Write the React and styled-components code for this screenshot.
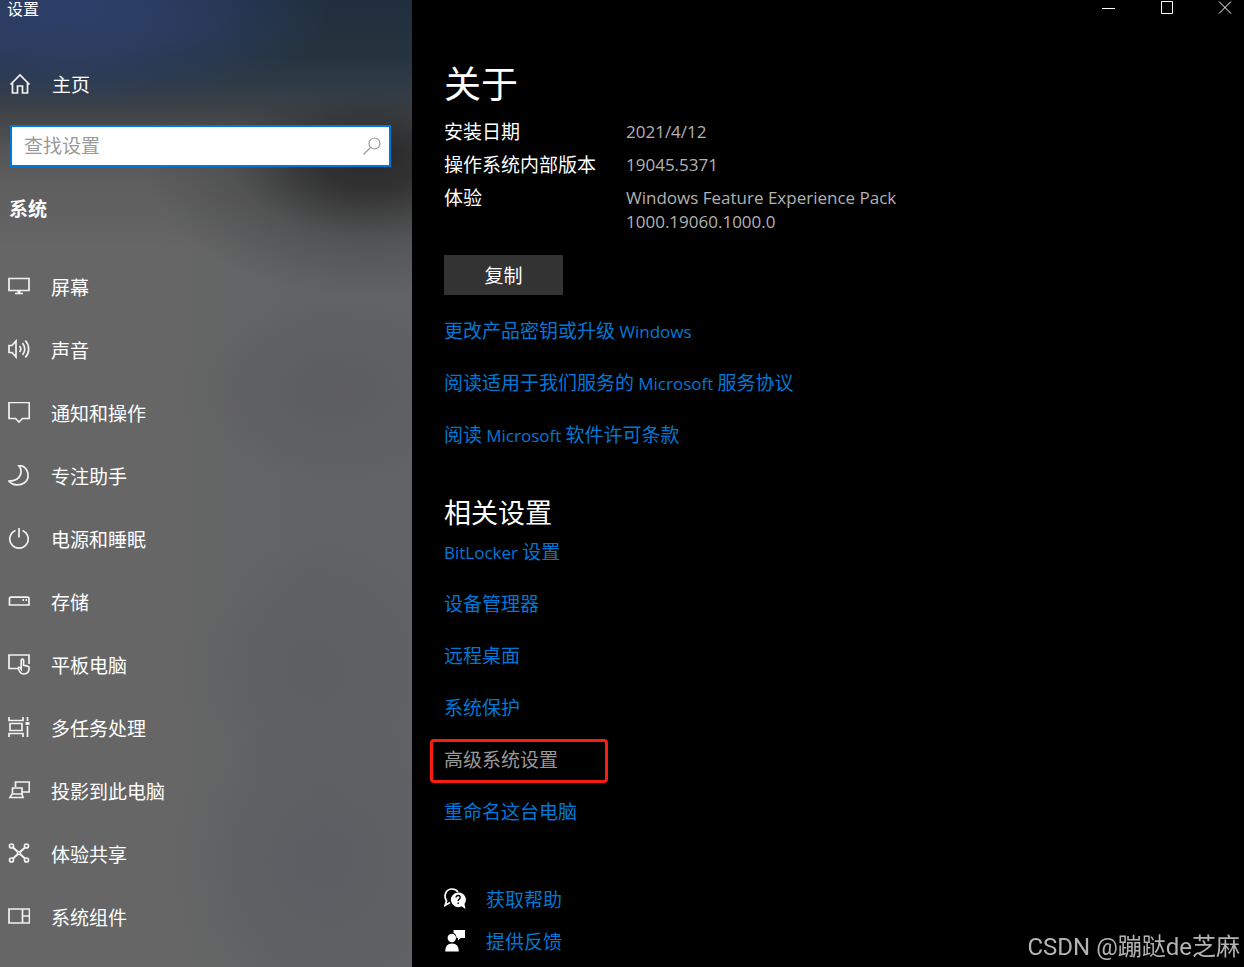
import React from "react";
import styled, { createGlobalStyle } from "styled-components";

const GlobalStyle = createGlobalStyle`
  * {
    box-sizing: border-box;
  }
  body {
    margin: 0;
    font-family: "Noto Sans CJK SC", sans-serif;
    font-size: 19px;
    line-height: 24px;
    color: #ffffff;
    background-color: #000000;
  }
`;

const Window = styled.div`
  display: flex;
  min-height: 100vh;
`;
const Sidebar = styled.aside`
  flex: 0 0 412px;
  max-width: 50%;
  background:
    radial-gradient(ellipse 260px 100px at 70px 10px, rgba(46, 64, 108, 0.95) 0%, rgba(46, 64, 108, 0.7) 45%, rgba(46, 64, 108, 0) 100%),
    linear-gradient(to bottom, #202e3d 0, #26343f 55px, rgba(44, 57, 69, 0.95) 80px, rgba(50, 58, 68, 0.65) 105px, rgba(60, 64, 70, 0.3) 125px, rgba(64, 66, 70, 0) 150px),
    radial-gradient(ellipse 230px 140px at 370px 155px, rgba(38, 38, 38, 0.95) 0%, rgba(42, 42, 42, 0.85) 25%, rgba(60, 60, 60, 0.4) 60%, rgba(90, 90, 90, 0) 100%),
    radial-gradient(ellipse 150px 90px at 330px 390px, rgba(86, 86, 88, 0.5) 0%, rgba(88, 88, 90, 0) 100%),
    radial-gradient(ellipse 130px 130px at 310px 670px, rgba(88, 92, 97, 0.6) 0%, rgba(88, 92, 97, 0) 100%),
    radial-gradient(ellipse 150px 150px at 320px 860px, rgba(88, 92, 97, 0.8) 0%, rgba(88, 92, 97, 0) 100%),
    linear-gradient(to right, rgba(96, 98, 100, 0) 160px, rgba(96, 98, 100, 0.8) 320px),
    linear-gradient(to bottom, #464748 0, #4c4d4e 125px, #5e5e5e 180px, #666666 250px);
`;
const AppName = styled.div`
  padding-left: 7px;
  font-size: 16px;
  line-height: 16px;
`;
const HomeLink = styled.a`
  display: flex;
  align-items: center;
  gap: 21px;
  margin-top: 47px;
  padding-left: 9px;
  height: 42px;
  color: #ffffff;
  text-decoration: none;
`;
const SearchBox = styled.label`
  display: flex;
  align-items: center;
  height: 42px;
  margin: 20px 21px 0 10px;
  padding: 0 6px 0 12px;
  background-color: #ffffff;
  border: 2px solid #0078d7;
`;
const SearchInput = styled.input`
  flex: 1;
  min-width: 0;
  height: 36px;
  padding: 0 0 4px;
  font: inherit;
  color: #333333;
  background: none;
  border: none;
  outline: none;
  &::placeholder {
    color: #999999;
    opacity: 1;
  }
`;
const SidebarTitle = styled.h2`
  margin: 29px 0 35px;
  padding-left: 9px;
  font-size: 19px;
  font-weight: 700;
  line-height: 24px;
`;
const NavList = styled.ul`
  margin: 0;
  padding: 0;
  list-style: none;
`;
const NavLink = styled.a`
  display: flex;
  align-items: center;
  gap: 21px;
  height: 63px;
  padding-left: 8px;
  color: #ffffff;
  text-decoration: none;
`;
const Icon = styled.svg`
  display: block;
  flex: none;
  width: 22px;
  height: 22px;
  fill: none;
  stroke: ${props => props.$color || "#f2f2f2"};
  stroke-width: 1.7;
`;
const Page = styled.div`
  flex: 1;
  min-width: 0;
`;
const TitleBar = styled.header`
  display: flex;
  justify-content: flex-end;
  gap: 20px;
`;
const TitleButton = styled.button`
  display: flex;
  align-items: center;
  justify-content: center;
  width: 38px;
  height: 16px;
  padding: 0;
  background: none;
  border: none;
`;
const Glyph = styled.svg`
  display: block;
  width: 14px;
  height: 14px;
  fill: none;
  stroke: #ffffff;
`;
const Content = styled.main`
  padding: 42px 32px 0;
`;
const PageTitle = styled.h1`
  margin: 0 0 13px;
  font-size: 37px;
  font-weight: 400;
  line-height: 48px;
`;
const Specs = styled.dl`
  display: grid;
  grid-template-columns: 170px 1fr;
  gap: 8px 12px;
  margin: 0;
`;
const SpecKey = styled.dt`
  white-space: nowrap;
`;
const SpecValue = styled.dd`
  max-width: 300px;
  margin: 0;
  padding-top: 1px;
  font-family: "Open Sans", sans-serif;
  font-size: 17px;
  color: #b2b2b2;
`;
const CopyButton = styled.button`
  display: block;
  width: 119px;
  height: 40px;
  margin: 21px 0 23px;
  padding: 0;
  font: inherit;
  color: #ffffff;
  background-color: #333333;
  border: none;
`;
const LinkList = styled.ul`
  display: flex;
  flex-direction: column;
  align-items: flex-start;
  gap: ${props => props.$gap || "28px"};
  margin: 0;
  padding: 0;
  list-style: none;
`;
const LinkItem = styled.li`
  position: relative;
`;
const TextLink = styled.a`
  display: flex;
  align-items: center;
  gap: 20px;
  color: ${props => (props.$muted ? "#999999" : "#0078d7")};
  text-decoration: none;
`;
const Latin = styled.span`
  font-family: "Open Sans", sans-serif;
  font-size: 17px;
  line-height: 1;
`;
const Marker = styled.div`
  position: absolute;
  inset: -8px -50px -12px -14px;
  border: 3px solid #fb1c12;
  border-radius: 4px;
  pointer-events: none;
`;
const SectionTitle = styled.h2`
  margin: 48px 0 9px;
  font-size: 27px;
  font-weight: 400;
  line-height: 36px;
`;
const HelpLinks = styled.div`
  margin-top: 64px;
`;
const Watermark = styled.div`
  position: fixed;
  right: 4px;
  bottom: 6px;
  font-family: Roboto, "Noto Sans CJK SC", sans-serif;
  font-size: 24px;
  line-height: 28px;
  color: #b4b4b4;
`;

const navItems = [
  {
    label: "屏幕",
    icon: <><path d="M1 3.500h20v12H1zM7 18.500h8" /><path d="M11 15.500v3" strokeWidth="3" /></>
  },
  {
    label: "声音",
    icon: <><path d="M1 7.500h3l4-4.500v16l-4-4.500H1z" /><path d="M11.500 8a4.500 4.500 0 0 1 0 6M14.500 5.200a8.500 8.500 0 0 1 0 11.600M17.300 2.500a12.500 12.500 0 0 1 0 17" /></>
  },
  {
    label: "通知和操作",
    icon: <path d="M1 1.500h20.300v16h-6.800L11 21l-3.500-3.500H1z" />
  },
  {
    label: "专注助手",
    icon: <path d="M10.500 1.200C15 6 14.200 16.800 1 17.200c3.800 4.600 11 4.800 15.500 1.500 6-4.500 4.500-16.500-6-17.500z" />
  },
  {
    label: "电源和睡眠",
    icon: <path d="M7.500 3.500a9.200 9.200 0 1 0 7 0M11 .5v10" />
  },
  {
    label: "存储",
    icon: <><path d="M1.500 15V8.500q0-1.300 1.300-1.300h16.900q1.300 0 1.300 1.300V15z" /><path d="M14.500 10h1.500M17.500 10H19" strokeWidth="2" /></>
  },
  {
    label: "平板电脑",
    icon: <><path d="M10 15.500H1V2h20v9" /><path d="M13.200 14.500V7.300q0-1.300 1.200-1.300t1.200 1.300v5l4 .8q1.700.4 1.500 2.200-.2 5.700-5 5.700-3.600 0-5-3.500-1.300-2.800-.3-3.200 1.200-.3 2.400 1.700z" /></>
  },
  {
    label: "多任务处理",
    icon: <><path d="M1 1v3.500h14V1M1 21v-3.500h14V21M2 7.500h12v7H2zM19.500 1v4M19.500 10v11" /><path d="M17.500 7.500h4" strokeWidth="3" /></>
  },
  {
    label: "投影到此电脑",
    icon: <path d="M7.500 8V3h13.800v10h-6.800M4.500 9h9.500v6H4.500zM2 18.500h13l-1-3.500H4z" />
  },
  {
    label: "体验共享",
    icon: (
      <>
        <circle cx="3.500" cy="4" r="2" />
        <circle cx="18.500" cy="4" r="2" />
        <circle cx="3.500" cy="18" r="2" />
        <circle cx="18.500" cy="18" r="2" />
        <circle cx="11" cy="11" r="1.500" />
        <path d="M5 5.500l5 4.500M17 5.500L12 10M5 16.500l5-4.500M17 16.500L12 12" strokeWidth="2" />
      </>
    )
  },
  {
    label: "系统组件",
    icon: <path d="M1 4h20.500v14H1zM14.500 4v14M14.500 11h7" />
  }
];

function SidebarNav() {
  return (
    <Sidebar>
      <AppName>设置</AppName>
      <HomeLink href="#home">
        <Icon viewBox="0 0 22 22">
          <path d="M1.500 11.500L11 2l9.500 9.500M3.500 9.500V20h5v-7h5v7h5V9.500" />
        </Icon>
        主页
      </HomeLink>
      <SearchBox>
        <SearchInput type="text" placeholder="查找设置" aria-label="查找设置" />
        <Icon viewBox="0 0 22 22" $color="#999999" aria-hidden="true">
          <circle cx="13.500" cy="8.500" r="5.500" strokeWidth="1.200" />
          <path d="M9.500 12.500L2.500 19.500" strokeWidth="1.200" />
        </Icon>
      </SearchBox>
      <SidebarTitle>系统</SidebarTitle>
      <nav>
        <NavList>
          {navItems.map(item => (
            <li key={item.label}>
              <NavLink href="#system">
                <Icon viewBox="0 1 22 22">{item.icon}</Icon>
                {item.label}
              </NavLink>
            </li>
          ))}
        </NavList>
      </nav>
    </Sidebar>
  );
}

function App() {
  return (
    <Window>
      <GlobalStyle />
      <SidebarNav />
      <Page>
        <TitleBar>
          <TitleButton aria-label="最小化">
            <Glyph viewBox="0 0 14 14"><path d="M0 7.500h13" /></Glyph>
          </TitleButton>
          <TitleButton aria-label="最大化">
            <Glyph viewBox="0 0 14 14"><path d="M1.500 .5h11v12h-11z" /></Glyph>
          </TitleButton>
          <TitleButton aria-label="关闭">
            <Glyph viewBox="0 0 14 14"><path d="M1 .5l12 12M13 .5l-12 12" /></Glyph>
          </TitleButton>
        </TitleBar>
        <Content>
          <PageTitle>关于</PageTitle>
          <Specs>
            <SpecKey>安装日期</SpecKey>
            <SpecValue>2021/4/12</SpecValue>
            <SpecKey>操作系统内部版本</SpecKey>
            <SpecValue>19045.5371</SpecValue>
            <SpecKey>体验</SpecKey>
            <SpecValue>Windows Feature Experience Pack 1000.19060.1000.0</SpecValue>
          </Specs>
          <CopyButton>复制</CopyButton>
          <LinkList>
            <LinkItem>
              <TextLink href="#key"><span>更改产品密钥或升级 <Latin>Windows</Latin></span></TextLink>
            </LinkItem>
            <LinkItem>
              <TextLink href="#services"><span>阅读适用于我们服务的 <Latin>Microsoft</Latin> 服务协议</span></TextLink>
            </LinkItem>
            <LinkItem>
              <TextLink href="#license"><span>阅读 <Latin>Microsoft</Latin> 软件许可条款</span></TextLink>
            </LinkItem>
          </LinkList>
          <SectionTitle>相关设置</SectionTitle>
          <LinkList>
            <LinkItem>
              <TextLink href="#bitlocker"><span><Latin>BitLocker</Latin> 设置</span></TextLink>
            </LinkItem>
            <LinkItem>
              <TextLink href="#devices">设备管理器</TextLink>
            </LinkItem>
            <LinkItem>
              <TextLink href="#remote">远程桌面</TextLink>
            </LinkItem>
            <LinkItem>
              <TextLink href="#protection">系统保护</TextLink>
            </LinkItem>
            <LinkItem>
              <TextLink href="#advanced" $muted>高级系统设置</TextLink>
              <Marker />
            </LinkItem>
            <LinkItem>
              <TextLink href="#rename">重命名这台电脑</TextLink>
            </LinkItem>
          </LinkList>
          <HelpLinks>
            <LinkList $gap="18px">
              <LinkItem>
                <TextLink href="#help">
                  <Icon viewBox="0 0 22 22" $color="#ffffff">
                    <path d="M6 14.500L1 17.500l1.500-4.500C-1 7 2.500 1 8 1q4 0 6 3" />
                    <path d="M14 4.500a7.300 7.300 0 1 0 3.500 13.800L21.500 21l-1-5A7.300 7.300 0 0 0 14 4.500z" fill="#ffffff" stroke="none" />
                    <path d="M12 9.500q.2-2 2.200-2t2 1.900q0 1-1 1.700-1 .6-1 2M14.200 14.500v1.500" stroke="#000000" strokeWidth="1.300" />
                  </Icon>
                  获取帮助
                </TextLink>
              </LinkItem>
              <LinkItem>
                <TextLink href="#feedback">
                  <Icon viewBox="0 0 22 22" $color="none">
                    <path d="M9.500 0h11.500v8h-4.500L14 10.500V8h-1.500Q12.500 4 9.500 3z" fill="#ffffff" />
                    <circle cx="7.800" cy="8" r="4.200" fill="#ffffff" />
                    <path d="M1.200 21.500q0-8 6.800-8t6.800 8z" fill="#ffffff" />
                  </Icon>
                  提供反馈
                </TextLink>
              </LinkItem>
            </LinkList>
          </HelpLinks>
        </Content>
      </Page>
      <Watermark>CSDN @蹦跶de芝麻</Watermark>
    </Window>
  );
}

export default App;
